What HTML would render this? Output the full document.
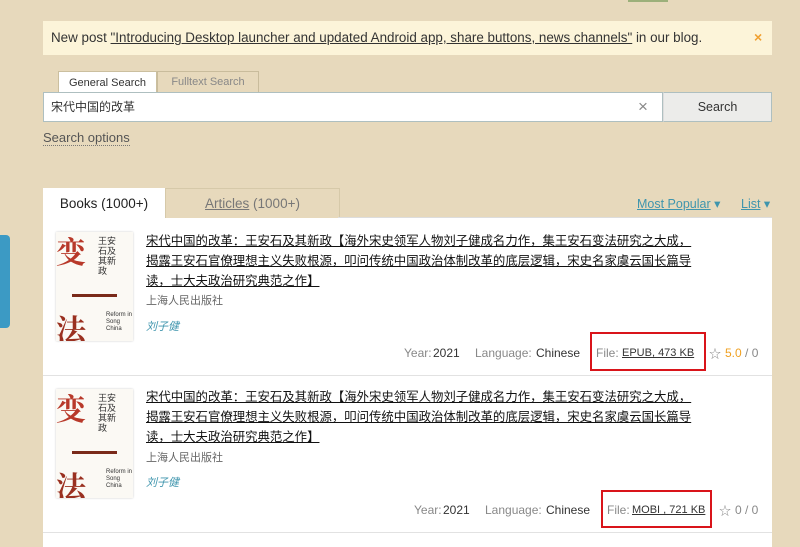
<!DOCTYPE html>
<html><head><meta charset="utf-8"><style>
body{margin:0;width:800px;height:535px;background:#e7d9bc;font-family:"Liberation Sans","Noto Sans CJK SC",sans-serif;position:relative;overflow:hidden;color:#333}
.a{position:absolute}
.notice{left:43px;top:21px;width:729px;height:34px;background:#fcf4d9;font-size:13.4px;line-height:34px;color:#333;white-space:nowrap}
.notice span{padding-left:8px}
u{text-decoration:underline}
.tab1{left:58px;top:71px;width:97px;height:22px;background:#fff;border:1px solid #cbbf9f;border-bottom:none;font-size:11px;text-align:center;line-height:22px}
.tab2{left:157px;top:71px;width:100px;height:20px;background:#e7d9bc;border:1px solid #c9bc9c;font-size:11px;text-align:center;line-height:20px;color:#888}
.input{left:43px;top:92px;width:620px;height:30px;background:#fff;border:1px solid #aebfc0;font-size:12px;line-height:28px;box-sizing:border-box;padding-left:7px}
.btn{left:663px;top:92px;width:109px;height:30px;background:#ececea;border:1px solid #aebfc0;border-left:1px solid #ddd;box-sizing:border-box;font-size:12.5px;text-align:center;line-height:28px;color:#333}
.opt{left:43px;top:130px;font-size:13px;color:#555;border-bottom:1px dotted #777;line-height:15px}
.panel{left:43px;top:217px;width:729px;height:330px;background:#fff}
.bt{left:43px;top:188px;width:122px;height:31px;background:#fff;font-size:13.5px;text-align:center;line-height:31px;color:#222}
.at{left:165px;top:188px;width:173px;height:29px;background:#e7d9bc;border:1px solid #d6c9a9;border-bottom:none;font-size:13.5px;text-align:center;line-height:29px;color:#777}
.sort{top:196px;font-size:12.5px;color:#3f95ad}
.cover{left:56px;width:77px;height:109px;background:#fbf9f4;box-shadow:0 0 2px #ccc;overflow:hidden}
.title{left:146px;width:600px;font-size:12.4px;line-height:20px;color:#111;text-decoration:underline;white-space:nowrap}
.pub{left:146px;font-size:11px;color:#666}
.auth{left:146px;font-size:11px;color:#3f95ad;font-style:italic}
.m{position:absolute;font-size:12px;color:#888;white-space:nowrap}
.k{color:#333}
.f{font-size:11px;top:auto}
.red{border:2px solid #d9141a;box-sizing:border-box}
.sep{left:43px;width:729px;height:1px;background:#e2e2e2}
</style></head><body>
<div class="a" style="left:628px;top:0;width:40px;height:2px;background:#9cb07a"></div>
<div class="a notice"><span>New post <u>"Introducing Desktop launcher and updated Android app, share buttons, news channels"</u> in our blog.</span></div>
<div class="a" style="left:754px;top:29px;color:#f0a030;font-size:14px;font-weight:bold">×</div>
<div class="a tab2">Fulltext Search</div>
<div class="a tab1">General Search</div>
<div class="a input">宋代中国的改革</div>
<div class="a" style="left:638px;top:97px;font-size:17px;color:#888">×</div>
<div class="a btn">Search</div>
<div class="a opt">Search options</div>
<div class="a" style="left:0;top:235px;width:10px;height:93px;background:#3c9ac4;border-radius:0 4px 4px 0"></div>
<div class="a panel"></div>
<div class="a at"><u>Articles</u> (1000+)</div>
<div class="a bt">Books (1000+)</div>
<div class="a" style="left:338px;top:217px;width:434px;height:1px;background:#ddd"></div>
<div class="a sort" style="left:637px"><u>Most Popular</u> ▾</div>
<div class="a sort" style="left:741px"><u>List</u> ▾</div>

<div class="a cover" style="top:232px"><div class="a" style="left:0;top:-4px;font-size:30px;font-weight:bold;color:#b8392a;font-family:'Noto Serif CJK SC',serif">变</div><div class="a" style="left:0;top:74px;font-size:30px;font-weight:bold;color:#9a3020;font-family:'Noto Serif CJK SC',serif">法</div><div class="a" style="left:42px;top:4px;font-size:9px;width:20px;line-height:10px;color:#333">王安石及其新政</div><div class="a" style="left:16px;top:62px;width:45px;height:3px;background:#7a2a1a"></div><div class="a" style="left:50px;top:80px;font-size:6px;line-height:7px">Reform in Song China</div></div>
<div class="a title" style="top:231px">宋代中国的改革：王安石及其新政【海外宋史领军人物刘子健成名力作，集王安石变法研究之大成，<br>揭露王安石官僚理想主义失败根源，叩问传统中国政治体制改革的底层逻辑，宋史名家虞云国长篇导<br>读，士大夫政治研究典范之作】</div>
<div class="a pub" style="top:292px">上海人民出版社</div>
<div class="a auth" style="top:318px">刘子健</div>
<div class="m" style="left:404px;top:346px">Year:</div><div class="m k" style="left:433px;top:346px">2021</div>
<div class="m" style="left:475px;top:346px">Language:</div><div class="m k" style="left:536px;top:346px">Chinese</div>
<div class="a red" style="left:590px;top:332px;width:116px;height:39px"></div>
<div class="m" style="left:596px;top:346px">File:</div><div class="m k" style="left:622px;top:347px;font-size:11px"><u>EPUB, 473 KB</u></div>
<div class="m" style="left:709px;top:345px">☆</div><div class="m" style="left:725px;top:346px"><span style="color:#f0a020">5.0</span> / 0</div>
<div class="a sep" style="top:375px"></div>

<div class="a cover" style="top:389px"><div class="a" style="left:0;top:-4px;font-size:30px;font-weight:bold;color:#b8392a;font-family:'Noto Serif CJK SC',serif">变</div><div class="a" style="left:0;top:74px;font-size:30px;font-weight:bold;color:#9a3020;font-family:'Noto Serif CJK SC',serif">法</div><div class="a" style="left:42px;top:4px;font-size:9px;width:20px;line-height:10px;color:#333">王安石及其新政</div><div class="a" style="left:16px;top:62px;width:45px;height:3px;background:#7a2a1a"></div><div class="a" style="left:50px;top:80px;font-size:6px;line-height:7px">Reform in Song China</div></div>
<div class="a title" style="top:387px">宋代中国的改革：王安石及其新政【海外宋史领军人物刘子健成名力作，集王安石变法研究之大成，<br>揭露王安石官僚理想主义失败根源，叩问传统中国政治体制改革的底层逻辑，宋史名家虞云国长篇导<br>读，士大夫政治研究典范之作】</div>
<div class="a pub" style="top:449px">上海人民出版社</div>
<div class="a auth" style="top:474px">刘子健</div>
<div class="m" style="left:414px;top:503px">Year:</div><div class="m k" style="left:443px;top:503px">2021</div>
<div class="m" style="left:485px;top:503px">Language:</div><div class="m k" style="left:546px;top:503px">Chinese</div>
<div class="a red" style="left:601px;top:490px;width:111px;height:38px"></div>
<div class="m" style="left:607px;top:503px">File:</div><div class="m k" style="left:632px;top:504px;font-size:11px"><u>MOBI , 721 KB</u></div>
<div class="m" style="left:719px;top:502px">☆</div><div class="m" style="left:735px;top:503px">0 / 0</div>
<div class="a sep" style="top:532px"></div>
</body></html>
